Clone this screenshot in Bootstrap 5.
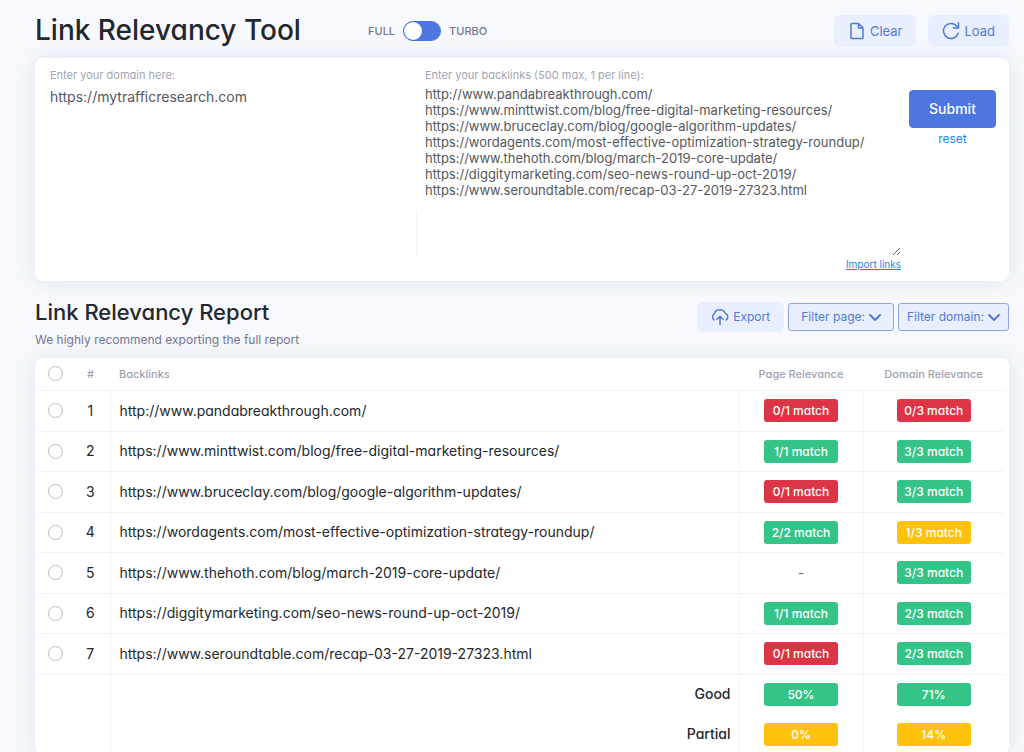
<!DOCTYPE html>
<html lang="en">
<head>
<meta charset="utf-8">
<meta name="viewport" content="width=device-width, initial-scale=1">
<title>Link Relevancy Tool</title>
<link href="https://cdn.jsdelivr.net/npm/bootstrap@5.3.0/dist/css/bootstrap.min.css" rel="stylesheet">
<style>
  body { background: #f7f9fe; color: #24272c; font-family: Inter, "Liberation Sans", sans-serif; font-feature-settings: "cv11"; font-size: 13px; line-height: 20px; }
  .page { padding: 13px 15px 0 35px; }
  .page-head { margin-bottom: 10px; gap: 12px; }
  .page-title { font-size: 28px; line-height: 35px; font-weight: 500; }
  .report-title { font-size: 22px; line-height: 28px; font-weight: 500; }
  .mode { left: 333px; color: #747690; font-size: 11px; font-weight: 500; gap: 8px; }
  .mode .form-check-input { width: 38px; height: 20px; margin: 0; border-color: #4d76e0; background-color: #4d76e0; background-position: left center; background-image: url("data:image/svg+xml,%3Csvg xmlns='http://www.w3.org/2000/svg' viewBox='-4 -4 8 8'%3E%3Ccircle r='4' fill='white'/%3E%3C/svg%3E"); }
  .btn { font-size: 13px; line-height: 20px; --bs-btn-border-radius: 6px; }
  .btn-soft { --bs-btn-bg: #e9efff; --bs-btn-color: #5079dc; --bs-btn-border-color: #e9efff; --bs-btn-hover-bg: #dce6ff; --bs-btn-hover-color: #4d76e0; height: 32px; padding: 0 13px; }
  .btn-export { height: 30px; font-size: 12px; }
  .btn-filter { --bs-btn-border-color: #8ba7ee; --bs-btn-border-radius: 3px; height: 28px; font-size: 12px; padding: 0 12px; }
  .btn-filter + .btn-filter { padding: 0 8px; }
  .btn-main { --bs-btn-bg: #4d76e0; --bs-btn-border-color: #4d76e0; --bs-btn-color: #fff; --bs-btn-hover-bg: #3f67d0; --bs-btn-hover-color: #fff; --bs-btn-border-radius: 4px; height: 38px; font-size: 14px; font-weight: 500; }
  .icon { fill: none; stroke: currentColor; stroke-width: 2; stroke-linecap: round; stroke-linejoin: round; flex: none; }
  .panel { background: #fff; border-radius: 8px; box-shadow: 0 0 20px rgba(70, 80, 130, .13); }
  .entry { padding: 9px 13px 9px 15px; }
  .entry label { color: #a3a4b4; font-size: 11px; line-height: 16px; }
  .entry .form-control { border: 0; padding: 0; border-radius: 0; background: transparent; color: #55585c; font-size: 13px; line-height: 16px; box-shadow: none; }
  .entry input.form-control { margin-top: 6px; font-size: 14px; }
  .entry textarea.form-control { margin-top: 3px; height: 170px; resize: vertical; white-space: pre; overflow: hidden; }
  .domain-col { width: 366px; }
  .links-col { padding-left: 8px; border-left: 1px solid transparent; border-image: linear-gradient(transparent 70%, #f2f2f5 70%, #f2f2f5 92%, transparent 92%) 1; }
  .submit-col { width: 87px; padding-top: 23px; }
  .blue-link { color: #1c86ef; font-size: 12px; }
  .import-link { font-size: 10px; line-height: 16px; }
  .report-head { margin: 17px 0 8px; }
  .subtitle { color: #747690; font-size: 12px; }
  .report { padding: 0 5px; }
  .report-table { table-layout: fixed; font-size: 14px; --bs-table-bg: transparent; --bs-table-color: #24272c; }
  .report-table th, .report-table td { padding: 0; height: 40px; border: solid #f3f3f5; border-width: 0 0 1px; }
  .report-table thead th { height: 32px; color: #a09fb4; font-size: 11px; font-weight: 500; vertical-align: middle; }
  .report-table tbody tr:nth-child(odd) td { height: 41px; }
  .report-table tbody td:nth-child(n+3) { border-left-width: 1px; }
  .report-table th:nth-child(3), .report-table tbody td:nth-child(3) { padding: 0 9px; }
  .report-table tfoot td { height: 40px; border-width: 0; }
  .report-table tfoot td + td { border-left-width: 1px; }
  .report-table tfoot td:nth-child(2) { padding-right: 8px; font-weight: 500; text-align: right; }
  .c-check { width: 31px; } .c-num { width: 39px; } .c-page { width: 124px; } .c-domain { width: 141px; }
  .report-table .form-check-input { display: block; width: 15px; height: 15px; margin: 0 auto; border-radius: 50%; border-color: #b9bbbf; }
  .match { display: block; width: 74px; height: 23px; margin: 0 auto; line-height: 23px; border-radius: 3px; color: #fff; font-size: 12px; font-weight: 500; }
  .none { background: #dc3545; } .good { background: #35c488; } .partial { background: #ffc20c; }
</style>
</head>
<body>
<main class="page">
  <header class="page-head position-relative d-flex align-items-center">
    <h1 class="page-title mb-0 me-auto">Link Relevancy Tool</h1>
    <div class="mode position-absolute d-flex align-items-center">
      <label for="mode">FULL</label>
      <div class="form-switch d-flex p-0"><input class="form-check-input" type="checkbox" role="switch" id="mode"></div>
      <label for="mode">TURBO</label>
    </div>
    <button class="btn btn-soft d-flex align-items-center gap-1" type="button">
      <svg class="icon" width="18" height="18" viewBox="0 0 24 24"><path d="M4 3a1 1 0 0 1 1-1h9l6 6v13a1 1 0 0 1-1 1H5a1 1 0 0 1-1-1zM14 2v6h6"/></svg>Clear</button>
    <button class="btn btn-soft d-flex align-items-center gap-1" type="button">
      <svg class="icon" width="18" height="18" viewBox="0 0 24 24"><path d="M21.500 15A10 10 0 1 1 20 6l2 2M22 1v7h-7"/></svg>Load</button>
  </header>

  <form class="panel entry d-flex">
    <div class="domain-col flex-shrink-0">
      <label class="d-block" for="domain">Enter your domain here:</label>
      <input class="form-control" id="domain" type="text" value="https://mytrafficresearch.com">
    </div>
    <div class="links-col flex-grow-1">
      <label class="d-block" for="links">Enter your backlinks (500 max, 1 per line):</label>
      <textarea class="form-control" id="links" spellcheck="false">http://www.pandabreakthrough.com/
https://www.minttwist.com/blog/free-digital-marketing-resources/
https://www.bruceclay.com/blog/google-algorithm-updates/
https://wordagents.com/most-effective-optimization-strategy-roundup/
https://www.thehoth.com/blog/march-2019-core-update/
https://diggitymarketing.com/seo-news-round-up-oct-2019/
https://www.seroundtable.com/recap-03-27-2019-27323.html</textarea>
      <a class="blue-link import-link d-block text-end" href="#">Import links</a>
    </div>
    <div class="submit-col flex-shrink-0 ms-2 text-center">
      <button class="btn btn-main w-100" type="submit">Submit</button>
      <a class="blue-link text-decoration-none" href="#">reset</a>
    </div>
  </form>

  <div class="report-head d-flex justify-content-between align-items-start">
    <div>
      <h2 class="report-title mb-0">Link Relevancy Report</h2>
      <p class="subtitle mt-1 mb-0">We highly recommend exporting the full report</p>
    </div>
    <div class="d-flex align-items-center mt-1 gap-1">
      <button class="btn btn-soft btn-export d-flex align-items-center gap-1" type="button">
        <svg class="icon" width="18" height="18" viewBox="0 0 24 24"><path d="M4 16A5 5 0 0 1 4 8a8 8 0 0 1 15-1 5 5 0 0 1 1 9M12 22V12M8 15l4-4 4 4"/></svg>Export</button>
      <button class="btn btn-soft btn-filter d-flex align-items-center gap-1" type="button">Filter page:
        <svg class="icon" width="12" height="12" viewBox="0 0 12 12"><path d="M1 4l5 5 5-5"/></svg></button>
      <button class="btn btn-soft btn-filter d-flex align-items-center gap-1" type="button">Filter domain:
        <svg class="icon" width="12" height="12" viewBox="0 0 12 12"><path d="M1 4l5 5 5-5"/></svg></button>
    </div>
  </div>

  <section class="panel report">
    <table class="table report-table align-middle mb-0">
      <colgroup><col class="c-check"><col class="c-num"><col><col class="c-page"><col class="c-domain"></colgroup>
      <thead><tr><th class="text-center"><input class="form-check-input" type="checkbox" aria-label="Select all"></th><th class="text-center">#</th><th>Backlinks</th><th class="text-center">Page Relevance</th><th class="text-center">Domain Relevance</th></tr></thead>
      <tbody>
        <tr><td class="text-center"><input class="form-check-input" type="checkbox" aria-label="Select row 1"></td><td class="text-center">1</td><td>http://www.pandabreakthrough.com/</td><td class="text-center"><span class="match none">0/1 match</span></td><td class="text-center"><span class="match none">0/3 match</span></td></tr>
        <tr><td class="text-center"><input class="form-check-input" type="checkbox" aria-label="Select row 2"></td><td class="text-center">2</td><td>https://www.minttwist.com/blog/free-digital-marketing-resources/</td><td class="text-center"><span class="match good">1/1 match</span></td><td class="text-center"><span class="match good">3/3 match</span></td></tr>
        <tr><td class="text-center"><input class="form-check-input" type="checkbox" aria-label="Select row 3"></td><td class="text-center">3</td><td>https://www.bruceclay.com/blog/google-algorithm-updates/</td><td class="text-center"><span class="match none">0/1 match</span></td><td class="text-center"><span class="match good">3/3 match</span></td></tr>
        <tr><td class="text-center"><input class="form-check-input" type="checkbox" aria-label="Select row 4"></td><td class="text-center">4</td><td>https://wordagents.com/most-effective-optimization-strategy-roundup/</td><td class="text-center"><span class="match good">2/2 match</span></td><td class="text-center"><span class="match partial">1/3 match</span></td></tr>
        <tr><td class="text-center"><input class="form-check-input" type="checkbox" aria-label="Select row 5"></td><td class="text-center">5</td><td>https://www.thehoth.com/blog/march-2019-core-update/</td><td class="text-center text-secondary">-</td><td class="text-center"><span class="match good">3/3 match</span></td></tr>
        <tr><td class="text-center"><input class="form-check-input" type="checkbox" aria-label="Select row 6"></td><td class="text-center">6</td><td>https://diggitymarketing.com/seo-news-round-up-oct-2019/</td><td class="text-center"><span class="match good">1/1 match</span></td><td class="text-center"><span class="match good">2/3 match</span></td></tr>
        <tr><td class="text-center"><input class="form-check-input" type="checkbox" aria-label="Select row 7"></td><td class="text-center">7</td><td>https://www.seroundtable.com/recap-03-27-2019-27323.html</td><td class="text-center"><span class="match none">0/1 match</span></td><td class="text-center"><span class="match good">2/3 match</span></td></tr>
      </tbody>
      <tfoot>
        <tr><td colspan="2"></td><td>Good</td><td class="text-center"><span class="match good">50%</span></td><td class="text-center"><span class="match good">71%</span></td></tr>
        <tr><td colspan="2"></td><td>Partial</td><td class="text-center"><span class="match partial">0%</span></td><td class="text-center"><span class="match partial">14%</span></td></tr>
      </tfoot>
    </table>
  </section>
</main>
<script src="https://cdn.jsdelivr.net/npm/bootstrap@5.3.0/dist/js/bootstrap.bundle.min.js"></script>
</body>
</html>
